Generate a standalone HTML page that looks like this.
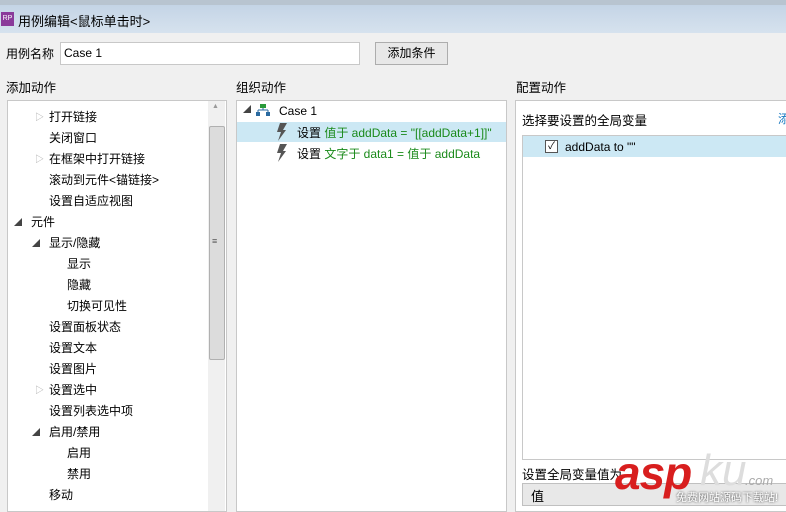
<!DOCTYPE html>
<html><head><meta charset="utf-8"><style>
body{margin:0;width:786px;height:508px;overflow:hidden;background:#f0f0f0;font-family:"Liberation Sans","Noto Sans CJK SC",sans-serif;font-size:12px;color:#000;position:relative}
.a{position:absolute;white-space:nowrap}
.g{color:#1a8a1a}
</style></head><body>
<div class="a" style="left:0;top:0;width:786px;height:5px;background:#b8c4d0"></div>
<div class="a" style="left:0;top:5px;width:786px;height:28px;background:linear-gradient(#c4d4e6,#d6e2ee)"></div>
<div class="a" style="left:1px;top:12px;width:13px;height:14px;background:#8a3a9a;color:#fff;font-size:7px;line-height:14px;text-align:center">RP</div>
<div class="a" style="left:18px;top:11px;font-size:13px">用例编辑&lt;鼠标单击时&gt;</div>
<div class="a" style="left:6px;top:45px">用例名称</div>
<div class="a" style="left:60px;top:42px;width:298px;height:21px;background:#fff;border:1px solid #c8c8c8"></div>
<div class="a" style="left:64px;top:46px">Case 1</div>
<div class="a" style="left:375px;top:42px;width:71px;height:21px;background:#e8e8e8;border:1px solid #adadad;text-align:center;line-height:21px">添加条件</div>
<div class="a" style="left:6px;top:77px;font-size:12.5px">添加动作</div>
<div class="a" style="left:236px;top:77px;font-size:12.5px">组织动作</div>
<div class="a" style="left:516px;top:77px;font-size:12.5px">配置动作</div>
<!-- left panel -->
<div class="a" style="left:7px;top:100px;width:218px;height:410px;background:#fff;border:1px solid #c8c8c8"></div>
<div class="a" style="left:208px;top:101px;width:17px;height:410px;background:#f0f0f0"></div>
<div class="a" style="left:209px;top:126px;width:14px;height:232px;background:#dcdcdc;border:1px solid #b0b0b0;border-radius:2px"></div>
<div class="a" style="left:212px;top:236px;font-size:9px;color:#555">≡</div>
<div class="a" style="left:212px;top:103px;font-size:7px;color:#999">▲</div>
<div style="position:absolute;left:0;top:107px;line-height:21px">
<div class="a" style="left:49px;top:0">打开链接</div>
<div class="a" style="left:49px;top:21px">关闭窗口</div>
<div class="a" style="left:49px;top:42px">在框架中打开链接</div>
<div class="a" style="left:49px;top:63px">滚动到元件&lt;锚链接&gt;</div>
<div class="a" style="left:49px;top:84px">设置自适应视图</div>
<div class="a" style="left:31px;top:105px">元件</div>
<div class="a" style="left:49px;top:126px">显示/隐藏</div>
<div class="a" style="left:67px;top:147px">显示</div>
<div class="a" style="left:67px;top:168px">隐藏</div>
<div class="a" style="left:67px;top:189px">切换可见性</div>
<div class="a" style="left:49px;top:210px">设置面板状态</div>
<div class="a" style="left:49px;top:231px">设置文本</div>
<div class="a" style="left:49px;top:252px">设置图片</div>
<div class="a" style="left:49px;top:273px">设置选中</div>
<div class="a" style="left:49px;top:294px">设置列表选中项</div>
<div class="a" style="left:49px;top:315px">启用/禁用</div>
<div class="a" style="left:67px;top:336px">启用</div>
<div class="a" style="left:67px;top:357px">禁用</div>
<div class="a" style="left:49px;top:378px">移动</div>
<div class="a" style="left:35px;top:0;color:#aaa;font-size:9px">▷</div>
<div class="a" style="left:35px;top:42px;color:#aaa;font-size:9px">▷</div>
<div class="a" style="left:14px;top:105px;color:#444;font-size:8px">◢</div>
<div class="a" style="left:32px;top:126px;color:#444;font-size:8px">◢</div>
<div class="a" style="left:35px;top:273px;color:#aaa;font-size:9px">▷</div>
<div class="a" style="left:32px;top:315px;color:#444;font-size:8px">◢</div>
</div>
<!-- middle panel -->
<div class="a" style="left:236px;top:100px;width:269px;height:410px;background:#fff;border:1px solid #c8c8c8"></div>
<div class="a" style="left:237px;top:122px;width:269px;height:20px;background:#cce8f4"></div>
<div class="a" style="left:243px;top:104px;color:#444;font-size:8px">◢</div>
<svg class="a" style="left:256px;top:104px" width="14" height="12"><rect x="4" y="0" width="6" height="4" fill="#2a9a3a"/><path d="M7 4V6M2 6H12M2 6V8M12 6V8" stroke="#2a6aa0" fill="none"/><rect x="0" y="8" width="4" height="4" fill="#2a6aa0"/><rect x="10" y="8" width="4" height="4" fill="#2a6aa0"/></svg>
<div class="a" style="left:279px;top:104px">Case 1</div>
<svg class="a" style="left:276px;top:123px" width="12" height="18"><path d="M4 0H11L7 7H10L2 18L5 9H1Z" fill="#555"/></svg>
<svg class="a" style="left:276px;top:144px" width="12" height="18"><path d="M4 0H11L7 7H10L2 18L5 9H1Z" fill="#555"/></svg>
<div class="a" style="left:297px;top:124px">设置 <span class="g">值于 addData = "[[addData+1]]"</span></div>
<div class="a" style="left:297px;top:145px">设置 <span class="g">文字于 data1 = 值于 addData</span></div>
<!-- right panel -->
<div class="a" style="left:515px;top:100px;width:280px;height:410px;background:#fff;border:1px solid #c8c8c8"></div>
<div class="a" style="left:522px;top:110px;font-size:12.5px">选择要设置的全局变量</div>
<div class="a" style="left:778px;top:110px;color:#1a7ac0">添</div>
<div class="a" style="left:522px;top:135px;width:270px;height:323px;border:1px solid #c8c8c8;background:#fff"></div>
<div class="a" style="left:523px;top:136px;width:270px;height:21px;background:#cce8f4"></div>
<div class="a" style="left:545px;top:140px;width:11px;height:11px;border:1px solid #555;background:#fff;font-size:10px;line-height:11px;text-align:center">✓</div>
<div class="a" style="left:565px;top:140px">addData to ""</div>
<div class="a" style="left:522px;top:464px;font-size:12.5px">设置全局变量值为</div>
<div class="a" style="left:522px;top:483px;width:270px;height:21px;background:#e8e8e8;border:1px solid #c0c0c0"></div>
<div class="a" style="left:531px;top:486px;font-size:13px">值</div>
<div class="a" style="left:615px;top:446px;font-size:46px;font-weight:bold;font-style:italic;color:#d81e1e;letter-spacing:-1px">asp</div>
<div class="a" style="left:700px;top:446px;font-size:44px;font-style:italic;color:#ddd">ku</div>
<div class="a" style="left:745px;top:473px;font-size:13px;font-style:italic;color:#aaa">.com</div>
<div class="a" style="left:676px;top:489px;font-size:11px;color:#fff;text-shadow:0 0 2px #333">免费网站源码下载站!</div>
</body></html>
